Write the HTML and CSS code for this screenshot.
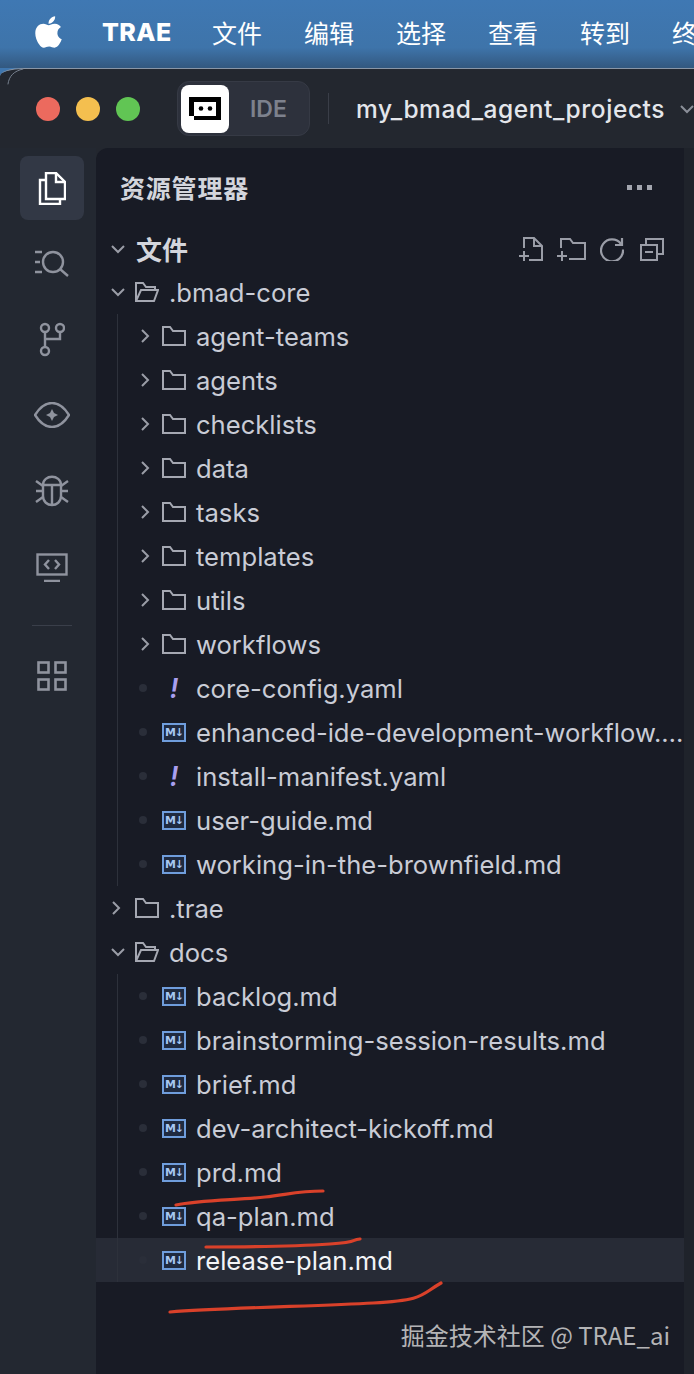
FILE: index.html
```html
<!DOCTYPE html>
<html lang="zh">
<head>
<meta charset="utf-8">
<title>TRAE</title>
<link rel="stylesheet" href="styles.css">
</head>
<body>
<svg class="defs" width="0" height="0" aria-hidden="true">
  <symbol id="folder" viewBox="0 0 24 20"><path d="M1 1h7l3 4h12v14H1z" fill="none" stroke="currentColor" stroke-width="2"/></symbol>
  <symbol id="open" viewBox="0 0 24 20"><path d="M1 19V1h7l3 4h9v3M1 19h18l4-11H6z" fill="none" stroke="currentColor" stroke-width="2"/></symbol>
  <symbol id="right" viewBox="0 0 10 14"><path d="M2 1l6 6-6 6" fill="none" stroke="currentColor" stroke-width="2"/></symbol>
  <symbol id="down" viewBox="0 0 14 10"><path d="M1 2l6 6 6-6" fill="none" stroke="currentColor" stroke-width="2"/></symbol>
</svg>

<header class="menubar">
  <svg class="apple" viewBox="0 0 384 512"><path fill="#fff" d="M318.7 268.7c-.2-36.7 16.4-64.4 50-84.8-18.8-26.9-47.2-41.7-84.7-44.6-35.5-2.8-74.3 20.7-88.5 20.7-15 0-49.4-19.7-76.4-19.7C63.3 141.2 4 184.8 4 273.5q0 39.3 14.4 81.2c12.8 36.7 59 126.7 107.2 125.2 25.2-.6 43-17.9 75.8-17.9 31.8 0 48.3 17.9 76.4 17.9 48.6-.7 90.4-82.5 102.6-119.3-65.2-30.7-61.7-90-61.7-91.9zm-56.6-164.2c27.3-32.4 24.8-61.9 24-72.5-24.1 1.4-52 16.4-67.9 34.9-17.5 19.8-27.8 44.3-25.6 71.9 26.1 2 49.9-11.4 69.5-34.3z"/></svg>
  <strong class="brand">TRAE</strong>
  <nav class="menu"><span>文件</span><span>编辑</span><span>选择</span><span>查看</span><span>转到</span><span>终端</span></nav>
</header>

<div class="window">
  <div class="titlebar">
    <div class="lights"><i class="red"></i><i class="yellow"></i><i class="green"></i></div>
    <div class="pill">
      <span class="logo"><svg viewBox="0 0 32 23" width="32" height="23"><path d="M0 0h32v23H5v-4H0z" fill="#000"/><rect x="5" y="5" width="22" height="14" fill="#fff"/><circle cx="12" cy="11.500" r="2.300" fill="#000"/><circle cx="21" cy="11.500" r="2.300" fill="#000"/></svg></span>
      <span class="ide">IDE</span>
    </div>
    <span class="sep"></span>
    <span class="project">my_bmad_agent_projects</span>
    <svg class="project-chev"><use href="#down"/></svg>
  </div>

  <div class="main">
    <aside class="activity">
      <span class="act active">
        <svg width="28" height="33" viewBox="0 0 28 33" fill="none" stroke="#fff" stroke-width="2.4"><path d="M8 1h10l9 9v17H8z"/><path d="M18 1v9h9"/><path d="M8 8H2v24h20v-5"/></svg>
      </span>
      <span class="act">
        <svg width="36" height="28" viewBox="0 0 36 28" fill="none" stroke="currentColor" stroke-width="2.4"><circle cx="19" cy="13" r="10"/><path d="M26 20l8 7M1 3h7M1 13h5M1 23h7"/></svg>
      </span>
      <span class="act">
        <svg width="26" height="35" viewBox="0 0 26 35" fill="none" stroke="currentColor" stroke-width="2.4"><circle cx="6" cy="6" r="4"/><circle cx="21" cy="6" r="4"/><circle cx="6" cy="29" r="4"/><path d="M6 10v15M21 10v7H6"/></svg>
      </span>
      <span class="act">
        <svg width="36" height="26" viewBox="0 0 36 26" fill="none" stroke="currentColor" stroke-width="2.4"><path d="M1 13C6 5 12 1 18 1s12 4 17 12c-5 8-11 12-17 12S6 21 1 13z"/><path d="M18 7l2 4 4 2-4 2-2 4-2-4-4-2 4-2z" fill="currentColor" stroke="none"/></svg>
      </span>
      <span class="act">
        <svg width="34" height="32" viewBox="0 0 34 32" fill="none" stroke="currentColor" stroke-width="2.4"><path d="M8 10c0-11 18-11 18 0v11c0 12-18 12-18 0z"/><path d="M8 10h18M17 10v21M1 6l7 5M33 6l-7 5M1 16h7M33 16h-7M1 27l7-5M33 27l-7-5"/></svg>
      </span>
      <span class="act">
        <svg width="32" height="29" viewBox="0 0 32 29" fill="none" stroke="currentColor" stroke-width="2.4"><rect x="1.500" y="1.500" width="29" height="20"/><path d="M13 7l-4 4.500 4 4.500M19 7l4 4.500-4 4.500M8 28h16"/></svg>
      </span>
      <span class="act-sep"></span>
      <span class="act ext">
        <svg width="30" height="30" viewBox="0 0 30 30" fill="none" stroke="currentColor" stroke-width="2.6"><rect x="1.500" y="1.500" width="10" height="10"/><rect x="18.500" y="1.500" width="10" height="10"/><rect x="1.500" y="18.500" width="10" height="10"/><rect x="18.500" y="18.500" width="10" height="10"/></svg>
      </span>
    </aside>

    <section class="sidebar">
      <div class="side-title"><h1>资源管理器</h1><span class="dots"><i></i><i></i><i></i></span></div>
      <div class="section-head">
        <svg class="chev-d"><use href="#down"/></svg>
        <h2>文件</h2>
        <span class="tools">
          <svg width="24" height="24" viewBox="0 0 24 24" fill="none" stroke="currentColor" stroke-width="2"><path d="M5 11V1h10l8 8v14H10"/><path d="M15 1v8h8M0 19h10M5 14v10"/></svg>
          <svg width="29" height="24" viewBox="0 0 29 24" fill="none" stroke="currentColor" stroke-width="2"><path d="M4 11V2h9l3 4h12v16H12"/><path d="M0 19h10M5 14v10"/></svg>
          <svg width="24" height="24" viewBox="0 0 24 24" fill="none" stroke="currentColor" stroke-width="2.200"><path d="M21 7a11 11 0 1 0 2 5.500"/><path d="M22 1v7h-7"/></svg>
          <svg width="24" height="24" viewBox="0 0 24 24" fill="none" stroke="currentColor" stroke-width="2"><rect x="1" y="8" width="16" height="15"/><path d="M6 8V2h17v15h-6M5 15h8"/></svg>
        </span>
      </div>

      <div class="row top"><svg class="chev-d"><use href="#down"/></svg><svg class="ficon"><use href="#open"/></svg><span class="name">.bmad-core</span></div>
      <div class="group">
        <div class="row"><svg class="chev-r"><use href="#right"/></svg><svg class="ficon"><use href="#folder"/></svg><span class="name">agent-teams</span></div>
        <div class="row"><svg class="chev-r"><use href="#right"/></svg><svg class="ficon"><use href="#folder"/></svg><span class="name">agents</span></div>
        <div class="row"><svg class="chev-r"><use href="#right"/></svg><svg class="ficon"><use href="#folder"/></svg><span class="name">checklists</span></div>
        <div class="row"><svg class="chev-r"><use href="#right"/></svg><svg class="ficon"><use href="#folder"/></svg><span class="name">data</span></div>
        <div class="row"><svg class="chev-r"><use href="#right"/></svg><svg class="ficon"><use href="#folder"/></svg><span class="name">tasks</span></div>
        <div class="row"><svg class="chev-r"><use href="#right"/></svg><svg class="ficon"><use href="#folder"/></svg><span class="name">templates</span></div>
        <div class="row"><svg class="chev-r"><use href="#right"/></svg><svg class="ficon"><use href="#folder"/></svg><span class="name">utils</span></div>
        <div class="row"><svg class="chev-r"><use href="#right"/></svg><svg class="ficon"><use href="#folder"/></svg><span class="name">workflows</span></div>
        <div class="row"><i class="dot"></i><span class="bang">!</span><span class="name">core-config.yaml</span></div>
        <div class="row"><i class="dot"></i><span class="md">M↓</span><span class="name">enhanced-ide-development-workflow.…</span></div>
        <div class="row"><i class="dot"></i><span class="bang">!</span><span class="name">install-manifest.yaml</span></div>
        <div class="row"><i class="dot"></i><span class="md">M↓</span><span class="name">user-guide.md</span></div>
        <div class="row"><i class="dot"></i><span class="md">M↓</span><span class="name">working-in-the-brownfield.md</span></div>
      </div>
      <div class="row top"><svg class="chev-r"><use href="#right"/></svg><svg class="ficon"><use href="#folder"/></svg><span class="name">.trae</span></div>
      <div class="row top"><svg class="chev-d"><use href="#down"/></svg><svg class="ficon"><use href="#open"/></svg><span class="name">docs</span></div>
      <div class="group">
        <div class="row"><i class="dot"></i><span class="md">M↓</span><span class="name">backlog.md</span></div>
        <div class="row"><i class="dot"></i><span class="md">M↓</span><span class="name">brainstorming-session-results.md</span></div>
        <div class="row"><i class="dot"></i><span class="md">M↓</span><span class="name">brief.md</span></div>
        <div class="row"><i class="dot"></i><span class="md">M↓</span><span class="name">dev-architect-kickoff.md</span></div>
        <div class="row"><i class="dot"></i><span class="md">M↓</span><span class="name">prd.md</span></div>
        <div class="row"><i class="dot"></i><span class="md">M↓</span><span class="name">qa-plan.md</span></div>
        <div class="row selected"><i class="dot"></i><span class="md">M↓</span><span class="name">release-plan.md</span></div>
      </div>
    </section>
    <div class="strip"></div>
  </div>
</div>

<svg class="ink" viewBox="0 0 694 1374" width="694" height="1374" aria-hidden="true">
  <path class="edge" d="M8 84C9 76 14 71 23 69"/>
  <path d="M176 1205C200 1200 240 1200 265 1197S300 1191 323 1191"/>
  <path d="M206 1247C250 1247 300 1246 330 1244S350 1240 360 1239"/>
  <path d="M170 1312C220 1308 320 1306 373 1303S420 1295 441 1283"/>
</svg>
<div class="watermark">掘金技术社区 @ TRAE_ai</div>
</body>
</html>
```

FILE: styles.css
```css
* { box-sizing: border-box; }
html, body { margin: 0; padding: 0; }
body {
  position: relative;
  width: 694px;
  height: 1374px;
  overflow: hidden;
  background: #3f76ae;
  font-family: Inter, "Noto Sans CJK SC", sans-serif;
  color: #c9ccd6;
}
.defs { position: absolute; }

.menubar {
  height: 68px;
  display: flex;
  align-items: center;
  padding: 0 0 4px 35px;
  background: linear-gradient(#3f78b3, #3e74aa 70%, #33587f);
  color: #fff;
  white-space: nowrap;
}
.apple { width: 27px; height: 36px; flex: none; }
.brand { margin-left: 40px; width: 69px; font-size: 25px; font-weight: 800; letter-spacing: .4px; }
.menu { display: flex; gap: 42px; margin-left: 41px; font-size: 25px; font-family: "Noto Sans CJK SC", sans-serif; }

.window {
  height: 1306px;
  background: #23272f;
  border-radius: 24px 0 0 0 / 8px 0 0 0;
  border-top: 1px solid #8a96a6;
  display: flex;
  flex-direction: column;
}
.titlebar {
  height: 79px;
  flex: none;
  display: flex;
  align-items: center;
  padding: 0 0 0 36px;
  white-space: nowrap;
}
.lights { display: flex; gap: 16px; }
.lights i { width: 24px; height: 24px; border-radius: 50%; display: block; }
.red { background: #ec6a5e; }
.yellow { background: #f4bf4f; }
.green { background: #61c554; }
.pill {
  margin-left: 37px;
  width: 134px;
  height: 55px;
  display: flex;
  align-items: center;
  padding-left: 3px;
  background: #2d313c;
  border: 1px solid #363a45;
  border-radius: 12px;
}
.logo {
  width: 48px;
  height: 48px;
  flex: none;
  border-radius: 8px;
  background: #fff;
  display: flex;
  align-items: center;
  justify-content: center;
}
.ide { margin-left: 21px; font-size: 23px; font-weight: 600; color: #7d818d; }
.sep { width: 1px; height: 31px; margin-left: 18px; background: #3a3e48; }
.project { margin-left: 27px; font-size: 24.500px; font-weight: 500; letter-spacing: .55px; color: #e4e6eb; }
.project-chev { width: 14px; height: 10px; margin-left: 15px; flex: none; color: #8b8f99; }

.main { flex: 1; display: flex; min-height: 0; }
.activity {
  width: 96px;
  flex: none;
  display: flex;
  flex-direction: column;
  align-items: center;
  padding: 8px 0 0 8px;
  color: #8f939e;
  background: #232831;
}
.act { width: 64px; height: 76px; display: flex; align-items: center; justify-content: center; flex: none; }
.act.active { height: 64px; border-radius: 8px; background: #323845; margin-bottom: 5px; }
.act-sep { width: 40px; height: 1px; background: #3a3f4a; margin: 20px 0 35px; flex: none; }
.act.ext { height: 30px; }

.sidebar {
  width: 588px;
  flex: none;
  background: #181b25;
  border-radius: 12px 0 0 0;
  overflow: hidden;
}
.strip { flex: 1; background: #1f232b; }
.side-title { height: 79px; padding: 0 32px 1px 24px; display: flex; align-items: center; justify-content: space-between; }
.side-title h1 { margin: 0; font: 700 25px/1 "Noto Sans CJK SC", sans-serif; letter-spacing: .8px; color: #d3d5dc; }
.dots { display: flex; gap: 5px; }
.dots i { width: 5px; height: 5px; background: #a3a6af; display: block; }

.section-head { height: 43px; display: flex; align-items: center; padding-left: 15px; }
.section-head h2 { margin: 0 0 0 11px; font: 700 26px/1 "Noto Sans CJK SC", sans-serif; color: #d3d5dc; }
.tools { margin-left: auto; margin-right: 20px; display: flex; align-items: center; gap: 14px; color: #9a9da7; }
.tools svg:last-child { margin-left: 2px; }

.row {
  height: 44px;
  display: flex;
  align-items: center;
  padding-left: 44px;
  white-space: nowrap;
}
.row.top { padding-left: 15px; }
.group { position: relative; }
.group::before {
  content: "";
  position: absolute;
  left: 21px;
  top: 0;
  bottom: 0;
  width: 1px;
  background: #2d313b;
}
.selected { background: #272b36; }
.selected .name { color: #f3f4f7; }
.name { font-size: 25.600px; color: #c9ccd6; margin-left: 10px; }
.chev-d { width: 14px; height: 10px; flex: none; color: #9a9da7; }
.chev-r { width: 10px; height: 14px; flex: none; margin-right: 6px; color: #9a9da7; }
.ficon { width: 24px; height: 20px; flex: none; margin-left: 6px; color: #a5a8b2; }
.row.top .ficon { margin-left: 10px; }
.row.top .chev-r { margin-right: 6px; }
.row.top .chev-r + .ficon { margin-left: 8px; }
.dot { width: 8px; height: 8px; margin: 0 0 0 -1px; border-radius: 50%; background: #2a2e39; flex: none; }
.bang {
  width: 24px;
  margin-left: 15px;
  flex: none;
  text-align: center;
  font-size: 27px;
  font-weight: 600;
  font-style: italic;
  line-height: 1;
  color: #a99ff0;
}
.md {
  width: 24px;
  height: 19px;
  margin-left: 15px;
  flex: none;
  border: 2px solid #6f9ddc;
  display: flex;
  align-items: center;
  justify-content: center;
  font: 700 11px/1 "DejaVu Sans", sans-serif;
  letter-spacing: -1px;
  color: #a6c6f2;
  background: #1f2a40;
}

.ink { position: absolute; left: 0; top: 0; pointer-events: none; }
.ink path { fill: none; stroke: #d9412a; stroke-width: 3.200; stroke-linecap: round; }
.ink path.edge { stroke: #77818f; stroke-width: 1; }
.watermark {
  position: absolute;
  right: 24px;
  top: 1319px;
  font: 400 24px/32px "Noto Sans CJK SC", sans-serif;
  color: #b4b4b6;
  white-space: nowrap;
}
```
